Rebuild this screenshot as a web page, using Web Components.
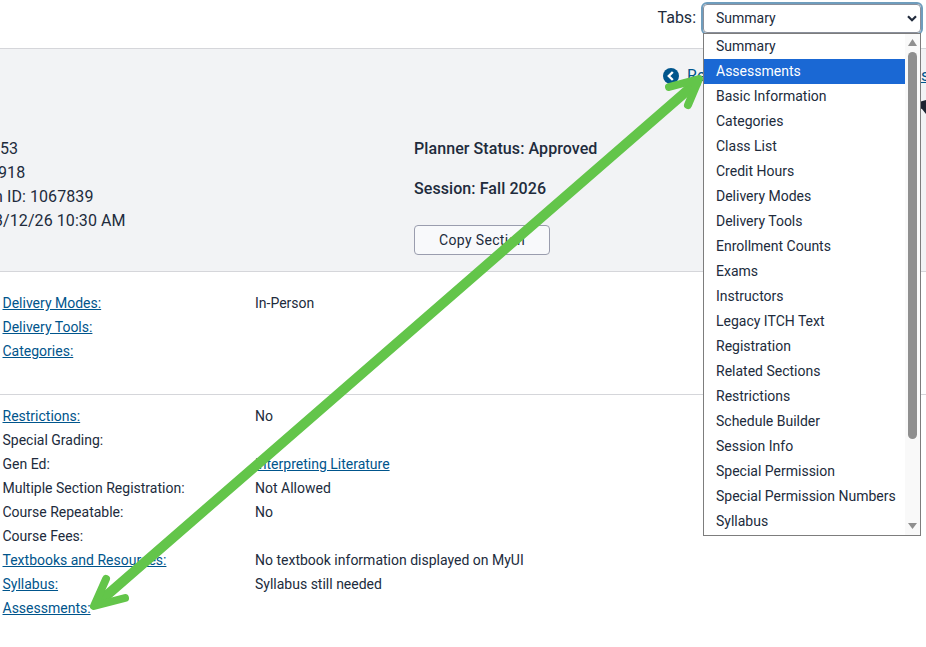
<!DOCTYPE html>
<html>
<head>
<meta charset="utf-8">
<title>Section</title>
<style>
  html, body { margin: 0; padding: 0; background: #fff; }
  body { width: 926px; height: 647px; overflow: hidden; position: relative; font-family: Roboto, "Liberation Sans", sans-serif; color: #212b3c; }
</style>
</head>
<body>
<template id="tabs-bar-tpl">
  <style>
    :host { display: flex; justify-content: flex-end; align-items: flex-start; box-sizing: border-box; padding: 4px 5px 0 0; border-bottom: 1px solid #d5d6da; height: 49px; }
    label { font-size: 16px; line-height: 28px; margin-right: 7px; }
    .sel { width: 218px; height: 29px; box-sizing: border-box; border: 1px solid #8a8f9b; border-radius: 4px; outline: 2px solid #6f9dbd; outline-offset: 0; display: flex; align-items: center; justify-content: space-between; padding: 0 3px 2px 12px; font-size: 14px; background: #fff; }
    svg { margin-top: 2px; }
  </style>
  <label>Tabs:</label>
  <div class="sel"><span>Summary</span>
    <svg width="10" height="7" viewBox="0 0 10 7"><path d="M1 1.2 5 5.2 9 1.2" fill="none" stroke="#212b3c" stroke-width="2.2"/></svg>
  </div>
</template>

<template id="summary-panel-tpl">
  <style>
    :host { display: block; height: 223px; box-sizing: border-box; background: #f2f3f5; border-bottom: 1px solid #d5d6da; font-size: 16px; line-height: 24px; position: relative; letter-spacing: .08px; }
    .cols { display: flex; padding-top: 87px; }
    .left { width: 414px; overflow: hidden; flex: none; padding-top: 1px; }
    .right { padding-top: 1px; }
    .right b { display: block; font-weight: 500; }
    .right b + b { margin-top: 16px; }
    button { display: block; margin-top: 24px; width: 136px; height: 30px; box-sizing: border-box; font: 400 14px Roboto, sans-serif; color: #212b3c; background: #f8f9fb; border: 1px solid #9a9dae; border-radius: 4px; letter-spacing: .35px; }
    .back { position: absolute; left: 663px; top: 15px; display: flex; align-items: center; gap: 8px; font-size: 16px; color: #00558c; white-space: nowrap; }
    .cut { position: absolute; left: 921px; top: 15px; font-size: 16px; color: #00558c; text-decoration: underline; }
    .mark { position: absolute; left: 919px; top: 51px; }
  </style>
  <div class="back">
    <svg width="16" height="16" viewBox="0 0 16 16"><circle cx="8" cy="8" r="8" fill="#00558c"/><path d="M9.8 4 5.8 8l4 4" fill="none" stroke="#fff" stroke-width="2.4"/></svg>
    <span>Re</span>
  </div>
  <span class="cut">s</span>
  <svg class="mark" width="7" height="14" viewBox="0 0 7 14"><path d="M0 2 7 0V14L3 9 0 8Z" fill="#1d2330"/></svg>
  <div class="cols">
    <div class="left"><slot name="left"></slot></div>
    <div class="right"><b>Planner Status: Approved</b><b>Session: Fall 2026</b><button>Copy Section</button></div>
  </div>
</template>

<template id="info-row-tpl">
  <style>
    :host { display: grid; grid-template-columns: 252.5px 1fr; height: 24px; line-height: 24px; font-size: 14px; }
    ::slotted(a) { color: #00558c; text-decoration: underline; }
  </style>
  <div><slot name="label"></slot></div>
  <div><slot></slot></div>
</template>

<template id="info-group-tpl">
  <style>
    :host { display: block; padding-left: 2.5px; box-sizing: border-box; }
  </style>
  <slot></slot>
</template>

<template id="tab-list-tpl">
  <style>
    :host { position: absolute; left: 703px; top: 33px; width: 218px; height: 503px; box-sizing: border-box; background: #fff; border: 1px solid #7d7d7d; display: flex; font-size: 14px; color: #212b3c; }
    .items { width: 201px; flex: none; overflow: hidden; }
    .bar { flex: 1; background: #f9f9f9; position: relative; }
    .thumb { position: absolute; left: 3px; top: 18px; width: 9px; height: 387px; border-radius: 5px; background: #8f8f8f; }
    svg { position: absolute; left: 3px; }
  </style>
  <div class="items"><slot></slot></div>
  <div class="bar">
    <svg style="top:5px" width="9" height="7" viewBox="0 0 9 7"><path d="M4.5 0 9 7H0Z" fill="#8f8f8f"/></svg>
    <div class="thumb"></div>
    <svg style="bottom:6px" width="9" height="6" viewBox="0 0 9 6"><path d="M0 0H9L4.5 6Z" fill="#8f8f8f"/></svg>
  </div>
</template>

<template id="tab-option-tpl">
  <style>
    :host { display: block; height: 25px; line-height: 24px; padding-left: 12px; white-space: nowrap; }
    :host([active]) { background: #1a68d4; color: #fff; }
  </style>
  <slot></slot>
</template>

<template id="arrow-layer-tpl">
  <style>
    :host { position: absolute; left: 0; top: 0; width: 926px; height: 647px; pointer-events: none; }
    svg { display: block; }
  </style>
  <svg width="926" height="647" viewBox="0 0 926 647">
    <g fill="none" stroke="#63c54a" stroke-linecap="round" stroke-linejoin="round">
      <path d="M696 83 99 602" stroke-width="10"/>
      <path d="M669 87 699 79 688 105" stroke-width="8"/>
      <path d="M106 579 94 606 125 598" stroke-width="8"/>
    </g>
  </svg>
</template>

<tabs-bar></tabs-bar>
<summary-panel>
  <div slot="left">
    <div style="margin-left:0">53</div>
    <div style="margin-left:-2px">918</div>
    <div style="margin-left:-6px">n ID: 1067839</div>
    <div style="margin-left:-6px">3/12/26 10:30 AM</div>
  </div>
</summary-panel>
<info-group style="padding-top:19px;height:123px;border-bottom:1px solid #d5d6da">
  <info-row><a slot="label" href="#">Delivery Modes:</a>In-Person</info-row>
  <info-row><a slot="label" href="#">Delivery Tools:</a></info-row>
  <info-row><a slot="label" href="#">Categories:</a></info-row>
</info-group>
<info-group style="padding-top:9px">
  <info-row><a slot="label" href="#">Restrictions:</a>No</info-row>
  <info-row><span slot="label">Special Grading:</span></info-row>
  <info-row><span slot="label">Gen Ed:</span><a href="#">Interpreting Literature</a></info-row>
  <info-row><span slot="label">Multiple Section Registration:</span>Not Allowed</info-row>
  <info-row><span slot="label">Course Repeatable:</span>No</info-row>
  <info-row><span slot="label">Course Fees:</span></info-row>
  <info-row><a slot="label" href="#">Textbooks and Resources:</a>No textbook information displayed on MyUI</info-row>
  <info-row><a slot="label" href="#">Syllabus:</a>Syllabus still needed</info-row>
  <info-row><a slot="label" href="#">Assessments:</a></info-row>
</info-group>
<tab-list>
  <tab-option>Summary</tab-option>
  <tab-option active>Assessments</tab-option>
  <tab-option>Basic Information</tab-option>
  <tab-option>Categories</tab-option>
  <tab-option>Class List</tab-option>
  <tab-option>Credit Hours</tab-option>
  <tab-option>Delivery Modes</tab-option>
  <tab-option>Delivery Tools</tab-option>
  <tab-option>Enrollment Counts</tab-option>
  <tab-option>Exams</tab-option>
  <tab-option>Instructors</tab-option>
  <tab-option>Legacy ITCH Text</tab-option>
  <tab-option>Registration</tab-option>
  <tab-option>Related Sections</tab-option>
  <tab-option>Restrictions</tab-option>
  <tab-option>Schedule Builder</tab-option>
  <tab-option>Session Info</tab-option>
  <tab-option>Special Permission</tab-option>
  <tab-option>Special Permission Numbers</tab-option>
  <tab-option>Syllabus</tab-option>
</tab-list>
<arrow-layer></arrow-layer>
<script>
  // each element just clones its template into an open shadow root
  for (const name of ['tabs-bar', 'summary-panel', 'info-row', 'info-group', 'tab-list', 'tab-option', 'arrow-layer']) {
    const tpl = document.getElementById(name + '-tpl');
    customElements.define(name, class extends HTMLElement {
      constructor() {
        super();
        this.attachShadow({ mode: 'open' });
        this.shadowRoot.appendChild(tpl.content.cloneNode(true));
      }
    });
  }
</script>
</body>
</html>
